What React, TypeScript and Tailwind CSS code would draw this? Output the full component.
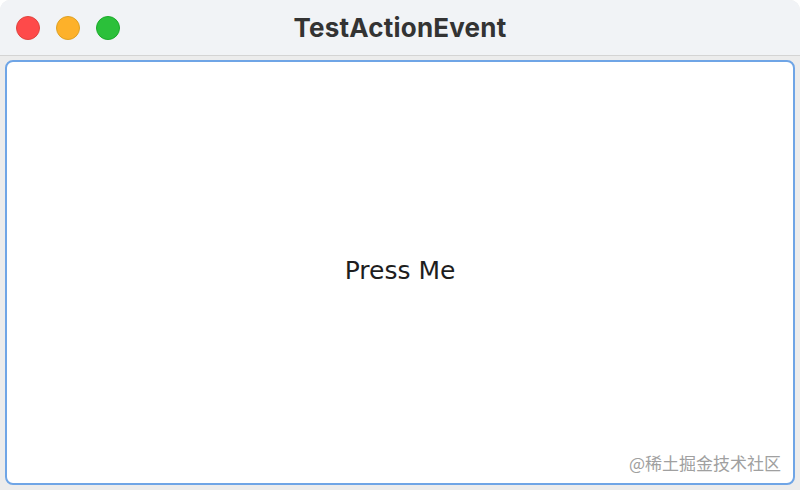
export default function App() {
  return (
    <div className="flex h-[490px] w-[800px] flex-col overflow-hidden rounded-t-[10px] bg-[#ececec]">
      <div className="relative flex h-[56px] shrink-0 items-center border-b border-[#d4d4d4] bg-[#f1f3f6]">
        <div className="flex items-center gap-[16px] pl-[16px]">
          <span className="h-[24px] w-[24px] rounded-full border border-[#e0443e] bg-[#fe4a4a]" />
          <span className="h-[24px] w-[24px] rounded-full border border-[#dea123] bg-[#fdb12a]" />
          <span className="h-[24px] w-[24px] rounded-full border border-[#1aab29] bg-[#2bc03a]" />
        </div>
        <div className="absolute inset-0 flex items-center justify-center text-[26px] font-bold tracking-[0.2px] text-[#333] [font-family:Inter,'Liberation_Sans',sans-serif]">
          TestActionEvent
        </div>
      </div>
      <div className="flex flex-1 px-[5px] pb-[5px] pt-[4px]">
        <button
          type="button"
          className="relative flex flex-1 items-center justify-center rounded-[8px] border-2 border-[#6fa5e6] bg-white text-[25px] text-[#1e1e1e] [font-family:'DejaVu_Sans',sans-serif]"
        >
          <span className="-mt-[4px]">Press Me</span>
          <span className="absolute bottom-[8px] right-[12px] text-[17px] text-[#a0a0a0] [font-family:'Noto_Sans_CJK_SC',sans-serif]">
            @稀土掘金技术社区
          </span>
        </button>
      </div>
    </div>
  );
}
